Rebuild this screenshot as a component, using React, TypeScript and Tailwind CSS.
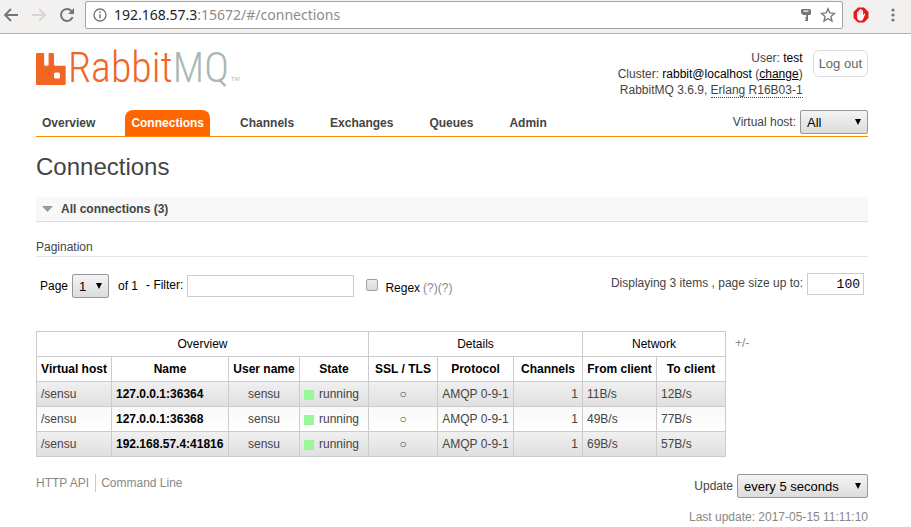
import React from "react";

const rows = [
  { name: "127.0.0.1:36364", from: "11B/s", to: "12B/s" },
  { name: "127.0.0.1:36368", from: "49B/s", to: "77B/s" },
  { name: "192.168.57.4:41816", from: "69B/s", to: "57B/s" },
];

const tabs = ["Overview", "Connections", "Channels", "Exchanges", "Queues", "Admin"];

function Picker({ id, options, className }: { id: string; options: string[]; className: string }) {
  return (
    <span className={`relative inline-block h-6 ${className}`}>
      <select
        id={id}
        className="block h-6 w-full appearance-none rounded-xs border border-[#979797] bg-linear-to-b from-[#f4f4f4] to-[#dcdcdc] pl-1.5 pt-px text-[13px] leading-5 text-black"
      >
        {options.map((o) => (
          <option key={o}>{o}</option>
        ))}
      </select>
      <svg className="pointer-events-none absolute right-1.5 top-2 h-2 w-2" viewBox="0 0 8 8" aria-hidden="true">
        <path d="M1 1h6L4 7z" fill="#000" />
      </svg>
    </span>
  );
}

function BrowserBar() {
  return (
    <div className="flex h-[34px] items-center border-b border-[#b4b2b0] bg-[#f2f1f0] pb-1">
      <div className="flex w-[85px] shrink-0 items-center gap-2.5 pl-0.5">
        <button aria-label="Back">
          <svg className="h-[18px] w-[18px]" viewBox="0 0 18 18" fill="none" stroke="#757575" strokeWidth="1.8">
            <path d="M16 9H3M9 3L3 9l6 6" />
          </svg>
        </button>
        <button aria-label="Forward">
          <svg className="h-[18px] w-[18px]" viewBox="0 0 18 18" fill="none" stroke="#d6d5d4" strokeWidth="1.8">
            <path d="M2 9h13M9 3l6 6-6 6" />
          </svg>
        </button>
        <button aria-label="Reload">
          <svg className="h-[18px] w-[18px]" viewBox="0 0 18 18" fill="none" stroke="#757575" strokeWidth="2">
            <path d="M14.6 11.2A6 6 0 1 1 13.5 5" />
            <path d="M16 2v6h-6z" fill="#757575" stroke="none" />
          </svg>
        </button>
      </div>
      <div className="flex h-7 flex-1 items-center rounded-xs border border-[#a5a4a3] bg-white pl-[7px] pr-1.5">
        <svg className="mr-[7px] h-3.5 w-3.5 shrink-0" viewBox="0 0 14 14" fill="none" stroke="#757575" aria-hidden="true">
          <circle cx="7" cy="7" r="6" strokeWidth="1.3" />
          <path d="M7 6.2v4M7 3.6v1.500" strokeWidth="1.5" />
        </svg>
        <div className="flex-1 font-['Noto_Sans','Open_Sans',sans-serif] text-sm text-[#8c8c8c]">
          <span className="text-[#222]">192.168.57.3</span>:15672/#/connections
        </div>
        <svg className="mr-2 h-3.5 w-3" viewBox="0 0 12 14" aria-hidden="true">
          <path d="M2 1h8l1 1v4l-1 1H8V13H5v-1.200h1.200V10.500H5V9.500h1.200V7H3L2 6 1 5V2zM3.500 2.500v1.200h5v-1.200z" fill="#757575" fillRule="evenodd" />
        </svg>
        <svg className="h-4 w-4" viewBox="0 0 16 16" fill="none" stroke="#757575" strokeWidth="1.3" aria-hidden="true">
          <path d="M8 1.700l1.800 4.300 4.700.4-3.600 3 1.100 4.600L8 11.500 4 14l1.100-4.600-3.600-3 4.700-.4z" />
        </svg>
      </div>
      <div className="flex w-[68px] shrink-0 items-center pl-2.5">
        <button aria-label="Ad blocker">
          <svg className="h-4 w-4" viewBox="0 0 16 16">
            <path d="M5 .5h6L15.500 5v6L11 15.500H5L.5 11V5z" fill="#e5191c" />
            <path d="M4.200 8V5.300q.7-1 1.300 0V3.400q.7-1 1.500 0V2.600q.8-1 1.600 0v1q.8-.8 1.500.2v4.400l1-1.400q1.200-.6 1 .6l-1.700 4Q9.800 13.800 8 13.800H7q-2.800-.4-2.800-3.200z" fill="#fff" />
            <path d="M5.600 5v2.500M7.200 4v3.500M8.700 4v3.500" stroke="#f0a5a5" strokeWidth=".5" />
          </svg>
        </button>
        <button aria-label="Menu" className="ml-5">
          <svg className="h-4 w-2" viewBox="0 0 8 16" fill="#757575">
            <circle cx="4" cy="3" r="1.600" />
            <circle cx="4" cy="8" r="1.600" />
            <circle cx="4" cy="13" r="1.600" />
          </svg>
        </button>
      </div>
    </div>
  );
}

function Logo() {
  return (
    <a href="#/" aria-label="RabbitMQ" className="flex h-[35px] items-end">
      <svg className="h-8 w-[30px]" viewBox="0 0 30 32" aria-hidden="true">
        <path
          d="M1.500 0h5.500q1.200 0 1.200 1.200V11.500q0 1.200 1.200 1.200h2q1.200 0 1.200-1.200V1.200Q12.600 0 13.800 0h3Q18 0 18 1.200V11.500q0 1.200 1.200 1.200H28.300q1.400 0 1.400 1.300V31q0 1-1.200 1H1.200Q0 32 0 31V1.200Q0 0 1.500 0zM19.500 19.500q-1.500 0-1.500 1.500v3q0 1.500 1.500 1.500h3q1.500 0 1.500-1.500v-3q0-1.500-1.500-1.500z"
          fill="#f36523"
          fillRule="evenodd"
        />
      </svg>
      <span className="ml-0.5 font-['Roboto_Condensed','Open_Sans_Condensed',sans-serif] text-[42px] font-light leading-[34px] text-[#f36523]">
        Rabbit<span className="text-[#a9b8b2]">MQ</span>
      </span>
      <span className="ml-0.5 text-[6px] leading-3 text-[#a9b8b2]">TM</span>
    </a>
  );
}

export default function App() {
  const th = "border border-[#ccc] px-1 font-bold text-black";
  const td = "border border-[#ccc] px-1";
  return (
    <div className="min-h-screen bg-white font-['Liberation_Sans',Arial,sans-serif] text-xs leading-4 text-[#444]">
      <BrowserBar />
      <div className="pl-9 pr-[43px] pt-4">
        <header className="flex h-[60px] items-start justify-between">
          <Logo />
          <div className="flex gap-2.5">
            <div className="text-right leading-4">
              <div>User: <b className="font-normal text-black">test</b></div>
              <div>
                Cluster: <span className="text-black">rabbit@localhost</span> (
                <a href="#/cluster-name" className="text-black underline">change</a>)
              </div>
              <div>
                RabbitMQ 3.6.9, <span className="border-b border-dotted border-[#444]">Erlang R16B03-1</span>
              </div>
            </div>
            <button className="h-[27px] rounded-md border border-[#ddd] px-[5px] text-[13px] text-[#666]">Log out</button>
          </div>
        </header>

        <nav className="flex h-[27px] justify-between border-b border-[#f80]">
          <ul className="flex gap-6">
            {tabs.map((t) => (
              <li key={t}>
                <a
                  href={`#/${t.toLowerCase()}`}
                  className={
                    t === "Connections"
                      ? "block h-[26px] rounded-t-lg bg-[#f60] px-1.5 font-bold leading-[26px] text-white"
                      : "block h-[26px] px-1.5 font-bold leading-[26px]"
                  }
                >
                  {t}
                </a>
              </li>
            ))}
          </ul>
          <div className="flex items-start gap-1">
            <label htmlFor="vhost" className="leading-6">Virtual host:</label>
            <Picker id="vhost" className="w-[68px]" options={["All", "/sensu"]} />
          </div>
        </nav>

        <h1 className="mt-[15px] text-2xl leading-[30px]">Connections</h1>

        <h2 className="mt-[15px] flex h-[25px] items-center border-b border-[#ddd] bg-[#f8f8f8] pl-1.5 font-bold">
          <svg className="mr-2 h-1.5 w-[11px]" viewBox="0 0 11 6" aria-hidden="true">
            <path d="M0 0h11L5.500 6z" fill="#999" />
          </svg>
          All connections (3)
        </h2>

        <h3 className="mt-[15px] h-5 border-b border-[#e4e4e4] leading-5">Pagination</h3>

        <div className="mt-4 flex items-start justify-between px-1">
          <div className="flex items-start text-black">
            <label htmlFor="page" className="mr-1 leading-[26px]">Page</label>
            <Picker id="page" className="mt-px w-[37px]" options={["1"]} />
            <span className="ml-[9px] leading-[26px]">of 1</span>
            <label htmlFor="filter" className="ml-2 mr-1 leading-6">- Filter:</label>
            <input id="filter" type="text" className="mt-0.5 h-[22px] w-[167px] border border-[#ccc] px-1" />
            <input
              id="regex"
              type="checkbox"
              className="ml-3 mt-1.5 h-3 w-3 appearance-none rounded-xs border border-[#a0a0a0] bg-linear-to-b from-[#ececec] to-[#dcdcdc]"
            />
            <label htmlFor="regex" className="ml-[7px] mr-[3px] leading-[30px]">Regex</label>
            <a href="#/regex" className="leading-[30px] text-[#888]">(?)</a>
            <a href="#/filter" className="leading-[30px] text-[#888]">(?)</a>
          </div>
          <div className="flex items-start gap-1">
            <label htmlFor="size" className="leading-5">Displaying 3 items , page size up to:</label>
            <input
              id="size"
              type="text"
              defaultValue="100"
              className="h-[22px] w-[57px] border border-[#ccc] px-[3px] text-right font-['Liberation_Mono',monospace] text-[13px] text-black"
            />
          </div>
        </div>

        <div className="mt-7 flex items-start gap-[9px]">
          <table className="w-[690px] table-fixed border-collapse text-center">
            <colgroup>
              <col className="w-[75px]" />
              <col className="w-[117px]" />
              <col className="w-[71px]" />
              <col className="w-[69px]" />
              <col className="w-[69px]" />
              <col className="w-[76px]" />
              <col className="w-[69px]" />
              <col className="w-[74px]" />
              <col className="w-[69px]" />
            </colgroup>
            <thead>
              <tr className="h-[25px] text-black">
                <th colSpan={4} className="border border-[#ccc] font-normal">Overview</th>
                <th colSpan={3} className="border border-[#ccc] font-normal">Details</th>
                <th colSpan={2} className="border border-[#ccc] font-normal">Network</th>
              </tr>
              <tr className="h-[25px] whitespace-nowrap">
                <th className={th}>Virtual host</th>
                <th className={th}>Name</th>
                <th className={th}>User name</th>
                <th className={th}>State</th>
                <th className={th}>SSL / TLS</th>
                <th className={th}>Protocol</th>
                <th className={th}>Channels</th>
                <th className={th}>From client</th>
                <th className={th}>To client</th>
              </tr>
            </thead>
            <tbody>
              {rows.map((r) => (
                <tr
                  key={r.name}
                  className="h-[25px] whitespace-nowrap odd:bg-linear-to-b odd:from-[#f0f0f0] odd:to-[#dfdfdf] even:bg-linear-to-b even:from-[#f8f8f8] even:to-white"
                >
                  <td className={`${td} text-left`}>/sensu</td>
                  <td className={`${td} text-left`}>
                    <a href="#/connection" className="font-bold text-black">{r.name}</a>
                  </td>
                  <td className={td}>sensu</td>
                  <td className={td}>
                    <div className="flex items-center gap-[5px]">
                      <span className="mt-0.5 h-2.5 w-2.5 bg-[#98f898]" />
                      running
                    </div>
                  </td>
                  <td className={td}>○</td>
                  <td className={td}>AMQP 0-9-1</td>
                  <td className={`${td} text-right`}>1</td>
                  <td className={`${td} text-left`}>{r.from}</td>
                  <td className={`${td} text-left`}>{r.to}</td>
                </tr>
              ))}
            </tbody>
          </table>
          <button className="mt-1 text-[#888]">+/-</button>
        </div>

        <footer className="mt-[17px] flex items-start justify-between">
          <div className="flex leading-[18px] text-[#888]">
            <a href="#/api" className="border-r border-[#ccc] pr-1.5">HTTP API</a>
            <a href="#/cli" className="pl-[5px]">Command Line</a>
          </div>
          <div className="text-right">
            <div className="flex items-start justify-end gap-1">
              <label htmlFor="update" className="leading-6">Update</label>
              <Picker id="update" className="w-[131px]" options={["every 5 seconds", "every 30 seconds", "Do not refresh"]} />
            </div>
            <div className="mt-[11px] text-[#888]">Last update: 2017-05-15 11:11:10</div>
          </div>
        </footer>
      </div>
    </div>
  );
}
